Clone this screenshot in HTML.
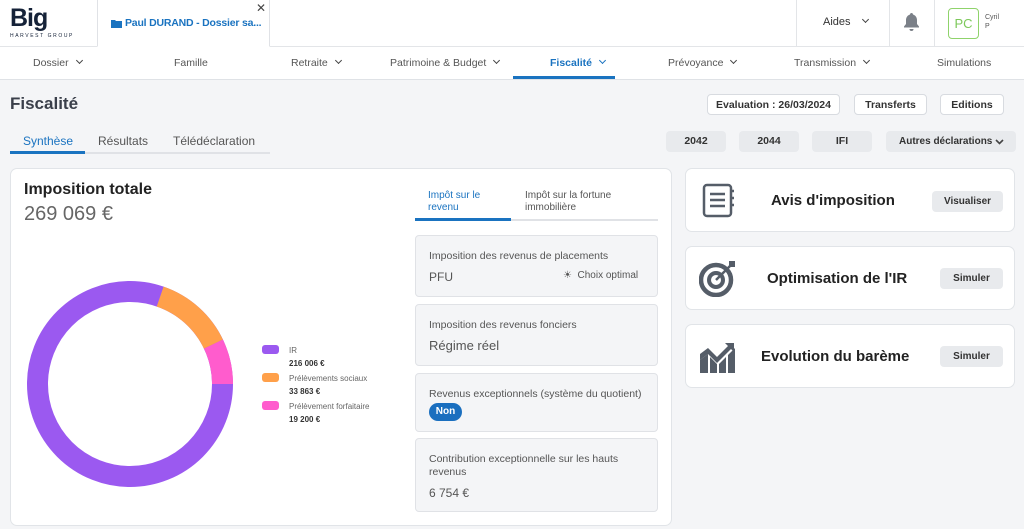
<!DOCTYPE html>
<html><head><meta charset="utf-8"><style>
*{box-sizing:border-box;margin:0;padding:0}
body{width:1024px;height:529px;overflow:hidden;background:#f4f5f7;font-family:"Liberation Sans",sans-serif;color:#333;position:relative}
.a{position:absolute;white-space:nowrap}
.hdr{left:0;top:0;width:1024px;height:47px;background:#fff;border-bottom:1px solid #e3e5e8}
.nav{left:0;top:47px;width:1024px;height:33px;background:#fff;border-bottom:1px solid #dfe2e6;font-size:10.5px;color:#555}
.nav span{position:absolute;top:10px}
.chev{display:inline-block;width:5px;height:5px;border-right:1.5px solid #444;border-bottom:1.5px solid #444;transform:rotate(45deg);margin-left:8px;position:relative;top:-3px}
.btn{background:#fff;border:1px solid #d8dbe0;border-radius:4px;font-size:10.5px;font-weight:bold;color:#333;text-align:center;line-height:20px}
.gb{background:#e8eaed;border-radius:4px;font-size:10.5px;font-weight:bold;color:#333;text-align:center;line-height:21px}
.card{background:#fff;border:1px solid #e1e4e8;border-radius:7px}
.sub{background:#f4f5f7;border:1px solid #e0e2e6;border-radius:4px;left:415px;width:243px}
.sub .t{position:absolute;left:13px;font-size:10.5px;color:#555}
.rc .ttl{position:absolute;font-size:15px;font-weight:bold;color:#222}
</style></head><body>
<div class="a hdr"></div>
<div class="a" style="left:10px;top:4px;font-size:25px;font-weight:bold;color:#152238;letter-spacing:-1px">Big</div>
<div class="a" style="left:10px;top:33px;font-size:5px;letter-spacing:1.6px;color:#152238">HARVEST GROUP</div>
<div class="a" style="left:97px;top:0;width:173px;height:47px;background:#fff;border-left:1px solid #e0e2e6;border-right:1px solid #e0e2e6;border-bottom:1px solid #fff"></div>
<div class="a" style="left:256px;top:1px;font-size:12px;color:#444">✕</div>
<svg class="a" style="left:111px;top:19px" width="11" height="9" viewBox="0 0 11 9"><path d="M0 1h4l1 1h6v7H0z" fill="#1a73c0"/></svg>
<div class="a" style="left:125px;top:17px;font-size:10.5px;font-weight:bold;color:#1a73c0;letter-spacing:-0.2px">Paul DURAND - Dossier sa...</div>
<div class="a" style="left:796px;top:0;width:1px;height:47px;background:#e3e5e8"></div>
<div class="a" style="left:889px;top:0;width:1px;height:47px;background:#e3e5e8"></div>
<div class="a" style="left:934px;top:0;width:1px;height:47px;background:#e3e5e8"></div>
<div class="a" style="left:823px;top:16px;font-size:11px;color:#333">Aides<span class="chev" style="margin-left:12px"></span></div>
<svg class="a" style="left:904px;top:13px" width="15" height="18" viewBox="0 0 15 18"><path d="M7.5 0c1 0 1.5.8 1.5 1.5C11.5 2.3 13 4.5 13 7v4l2 2.5v1H0v-1L2 11V7c0-2.5 1.5-4.7 4-5.5C6 .8 6.5 0 7.5 0zM5.5 16h4a2 2 0 0 1-4 0z" fill="#7b8088"/></svg>
<div class="a" style="left:948px;top:8px;width:31px;height:31px;border:1px solid #8fd36b;border-radius:4px;color:#7cc85a;font-size:13px;text-align:center;line-height:29px">PC</div>
<div class="a" style="left:985px;top:13px;font-size:7px;color:#555;line-height:9px">Cyril<br>P</div>

<div class="a nav">
<span style="left:33px">Dossier<i class="chev"></i></span>
<span style="left:174px">Famille</span>
<span style="left:291px">Retraite<i class="chev"></i></span>
<span style="left:390px">Patrimoine &amp; Budget<i class="chev"></i></span>
<span style="left:550px;color:#1a73c0;font-weight:bold">Fiscalité<i class="chev" style="border-color:#1a73c0"></i></span>
<span style="left:668px">Prévoyance<i class="chev"></i></span>
<span style="left:794px">Transmission<i class="chev"></i></span>
<span style="left:937px">Simulations</span>
</div>
<div class="a" style="left:513px;top:76px;width:102px;height:3px;background:#1a73c0"></div>

<div class="a" style="left:10px;top:94px;font-size:17px;font-weight:bold;color:#3a3f4a">Fiscalité</div>
<div class="a btn" style="left:707px;top:94px;width:133px;height:21px">Evaluation : 26/03/2024</div>
<div class="a btn" style="left:854px;top:94px;width:73px;height:21px">Transferts</div>
<div class="a btn" style="left:940px;top:94px;width:64px;height:21px">Editions</div>

<div class="a" style="left:10px;top:152px;width:260px;height:2px;background:#e0e2e6"></div>
<div class="a" style="left:10px;top:151px;width:75px;height:3px;background:#1a73c0"></div>
<div class="a" style="left:23px;top:134px;font-size:12px;color:#1a73c0">Synthèse</div>
<div class="a" style="left:98px;top:134px;font-size:12px;color:#555">Résultats</div>
<div class="a" style="left:173px;top:134px;font-size:12px;color:#555">Télédéclaration</div>

<div class="a gb" style="left:666px;top:131px;width:60px">2042</div>
<div class="a gb" style="left:739px;top:131px;width:60px">2044</div>
<div class="a gb" style="left:812px;top:131px;width:60px">IFI</div>
<div class="a gb" style="left:886px;top:131px;width:130px;text-align:left;padding-left:13px;font-size:10px">Autres déclarations</div>
<svg class="a" style="left:995px;top:139px" width="9" height="6" viewBox="0 0 9 6"><path d="M1 1l3.5 3.5L8 1" fill="none" stroke="#444" stroke-width="1.6"/></svg>

<div class="a card" style="left:10px;top:168px;width:662px;height:358px"></div>
<div class="a" style="left:24px;top:181px;font-size:16px;font-weight:bold;color:#222">Imposition totale</div>
<div class="a" style="left:24px;top:203px;font-size:20px;color:#666">269 069 €</div>
<svg class="a" style="left:27px;top:281px" width="206" height="206" viewBox="0 0 206 206">
<g transform="translate(103,103) scale(1,-1)" fill="none" stroke-width="21">
<circle r="92.5" stroke="#9b59f0"/>
<circle r="92.5" stroke="#ff5ccd" stroke-dasharray="41.3 600"/>
<circle r="92.5" stroke="#ffa04a" stroke-dasharray="0 41.3 73.2 600"/>
</g></svg>
<div class="a" style="left:262px;top:345px;width:17px;height:9px;background:#9b59f0;border-radius:3px"></div>
<div class="a" style="left:262px;top:373px;width:17px;height:9px;background:#ffa04a;border-radius:3px"></div>
<div class="a" style="left:262px;top:401px;width:17px;height:9px;background:#ff5ccd;border-radius:3px"></div>
<div class="a" style="left:289px;top:344px;font-size:8px;color:#666;line-height:13px">IR<br><b style="color:#333">216 006 €</b></div>
<div class="a" style="left:289px;top:372px;font-size:8px;color:#666;line-height:13px">Prélèvements sociaux<br><b style="color:#333">33 863 €</b></div>
<div class="a" style="left:289px;top:400px;font-size:8px;color:#666;line-height:13px">Prélèvement forfaitaire<br><b style="color:#333">19 200 €</b></div>

<div class="a" style="left:415px;top:219px;width:243px;height:2px;background:#e0e2e6"></div>
<div class="a" style="left:415px;top:218px;width:96px;height:3px;background:#1a73c0"></div>
<div class="a" style="left:428px;top:190px;font-size:10px;color:#1a73c0;line-height:12px">Impôt sur le<br>revenu</div>
<div class="a" style="left:525px;top:190px;font-size:10px;color:#555;line-height:12px">Impôt sur la fortune<br>immobilière</div>

<div class="a sub" style="top:235px;height:62px"><div class="t" style="top:14px">Imposition des revenus de placements</div><div class="t" style="top:34px;font-size:12px">PFU</div><div class="t" style="top:34px;left:147px;font-size:10px">☀&nbsp; Choix optimal</div></div>
<div class="a sub" style="top:304px;height:62px"><div class="t" style="top:14px">Imposition des revenus fonciers</div><div class="t" style="top:33px;font-size:13px">Régime réel</div></div>
<div class="a sub" style="top:373px;height:59px"><div class="t" style="top:14px">Revenus exceptionnels (système du quotient)</div><div class="a" style="left:13px;top:29px;width:33px;height:18px;border-radius:9px;background:#1a6fbf;color:#fff;font-size:10px;font-weight:bold;text-align:center;line-height:18px">Non</div></div>
<div class="a sub" style="top:438px;height:74px"><div class="t" style="top:14px;line-height:13px">Contribution exceptionnelle sur les hauts<br>revenus</div><div class="t" style="top:47px;font-size:12px">6 754 €</div></div>

<div class="a card rc" style="left:685px;top:168px;width:330px;height:64px"><div class="ttl" style="left:85px;top:23px">Avis d'imposition</div><div class="a gb" style="left:246px;top:22px;width:71px;font-size:10px">Visualiser</div></div>
<div class="a card rc" style="left:685px;top:246px;width:330px;height:64px"><div class="ttl" style="left:81px;top:23px">Optimisation de l'IR</div><div class="a gb" style="left:254px;top:21px;width:63px;font-size:10px">Simuler</div></div>
<div class="a card rc" style="left:685px;top:324px;width:330px;height:64px"><div class="ttl" style="left:75px;top:23px">Evolution du barème</div><div class="a gb" style="left:254px;top:21px;width:63px;font-size:10px">Simuler</div></div>

<svg class="a" style="left:702px;top:183px" width="34" height="35" viewBox="0 0 34 35" fill="none" stroke="#555d68" stroke-width="2.5"><rect x="2" y="2" width="27" height="31" rx="3"/><path d="M8 11h15M8 17h15M8 23h15M29 8h3M29 15h3M29 22h3"/></svg>
<svg class="a" style="left:699px;top:260px" width="38" height="37" viewBox="0 0 38 37"><circle cx="17" cy="20" r="15" fill="none" stroke="#555d68" stroke-width="4.5"/><circle cx="17" cy="20" r="7" fill="none" stroke="#555d68" stroke-width="4"/><path d="M17 20L33 4" stroke="#555d68" stroke-width="2.5"/><path d="M30 1l6 0-6 6z M36 1v6l-6 0z" fill="#555d68"/></svg>
<svg class="a" style="left:700px;top:340px" width="37" height="33" viewBox="0 0 37 33" fill="#555d68"><path d="M0 14l8-6 9 9 11-11-3-3h9v9l-3-3-14 14-9-9-8 6z"/><path d="M0 20l8-6v19H0zM10 17l7 7v9h-7zM19 24l7-7v16h-7zM28 15l7-7v25h-7z"/></svg>
</body></html>
